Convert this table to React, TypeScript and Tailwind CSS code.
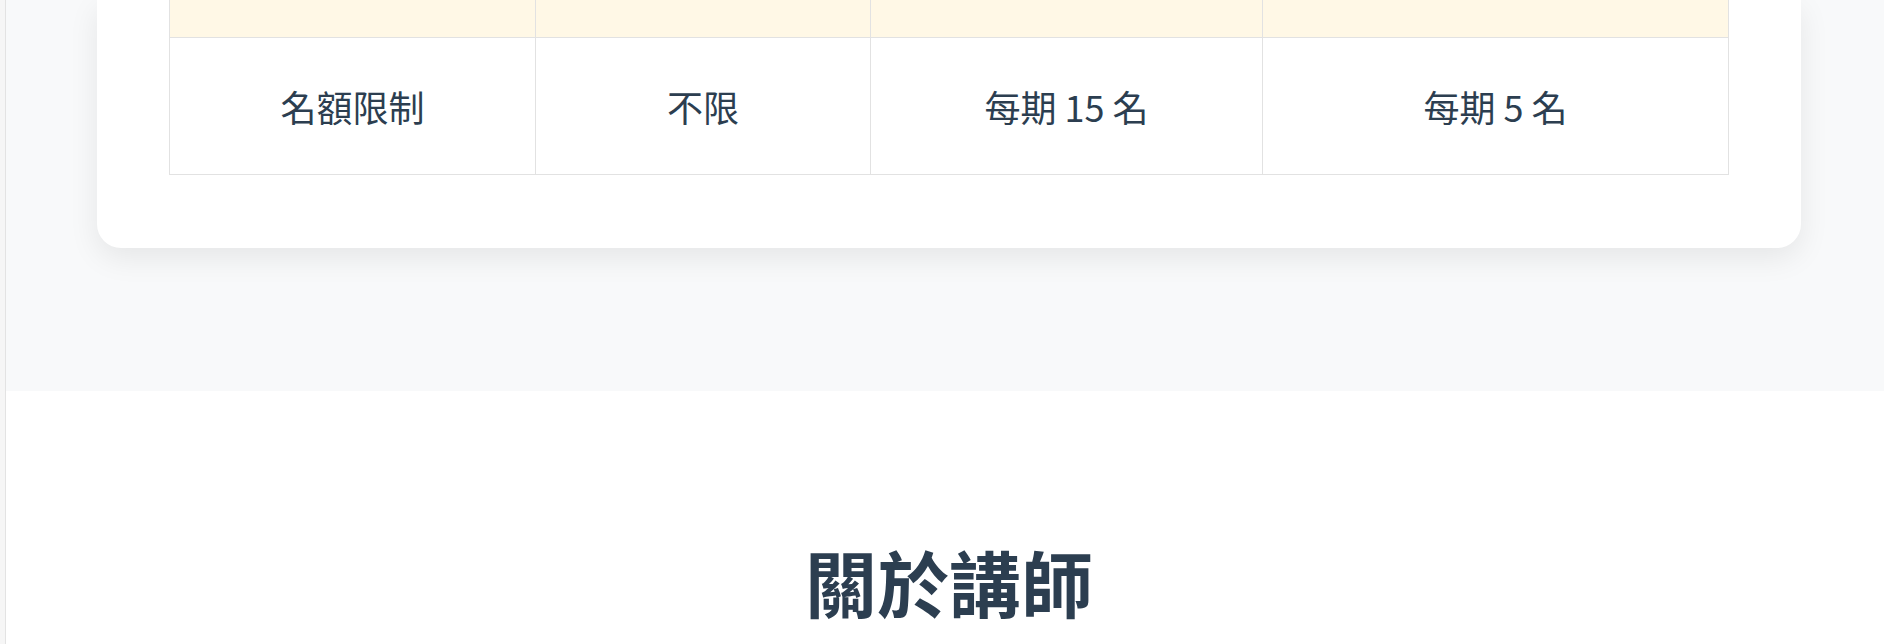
const rows = [
  { label: "名額限制", a: "不限", b: "每期 15 名", c: "每期 5 名" },
];

export default function App() {
  return (
    <div className="flex min-h-screen w-full bg-white font-['Noto_Sans_CJK_TC','Noto_Sans',sans-serif] text-[#2c3e50]">
      <div className="w-[6px] shrink-0 border-r border-[#e3e3e3] bg-[#f6f6f6]" />
      <main className="flex-1">
        <section className="bg-[#f8f9fa] pl-[91px] pr-[83px] pb-[143px]">
          <div className="rounded-b-3xl bg-white px-[72px] pb-[73px] shadow-[0_10px_30px_rgba(0,0,0,0.08)]">
            <table className="w-full table-fixed border-separate border-spacing-0 text-center">
              <colgroup>
                <col className="w-[367px]" />
                <col className="w-[335px]" />
                <col className="w-[392px]" />
                <col />
              </colgroup>
              <thead>
                <tr className="bg-[#fff8e6]">
                  <th className="h-[38px] border-b border-l border-r border-[#e2e2e2]" />
                  <th className="h-[38px] border-b border-r border-[#e2e2e2]" />
                  <th className="h-[38px] border-b border-r border-[#e2e2e2]" />
                  <th className="h-[38px] border-b border-r border-[#e2e2e2]" />
                </tr>
              </thead>
              <tbody>
                {rows.map((r) => (
                  <tr key={r.label} className="text-[36px] font-normal">
                    <td className="h-[137px] border-b border-l border-r border-[#e2e2e2] align-middle">{r.label}</td>
                    <td className="h-[137px] border-b border-r border-[#e2e2e2] align-middle">{r.a}</td>
                    <td className="h-[137px] border-b border-r border-[#e2e2e2] align-middle">{r.b}</td>
                    <td className="h-[137px] border-b border-r border-[#e2e2e2] align-middle">{r.c}</td>
                  </tr>
                ))}
              </tbody>
            </table>
          </div>
        </section>

        <section className="bg-white pt-[154px] pl-[8px] pb-[80px]">
          <h2 className="text-center text-[72px] font-bold leading-none text-[#2c3e50]">關於講師</h2>
        </section>
      </main>
    </div>
  );
}
